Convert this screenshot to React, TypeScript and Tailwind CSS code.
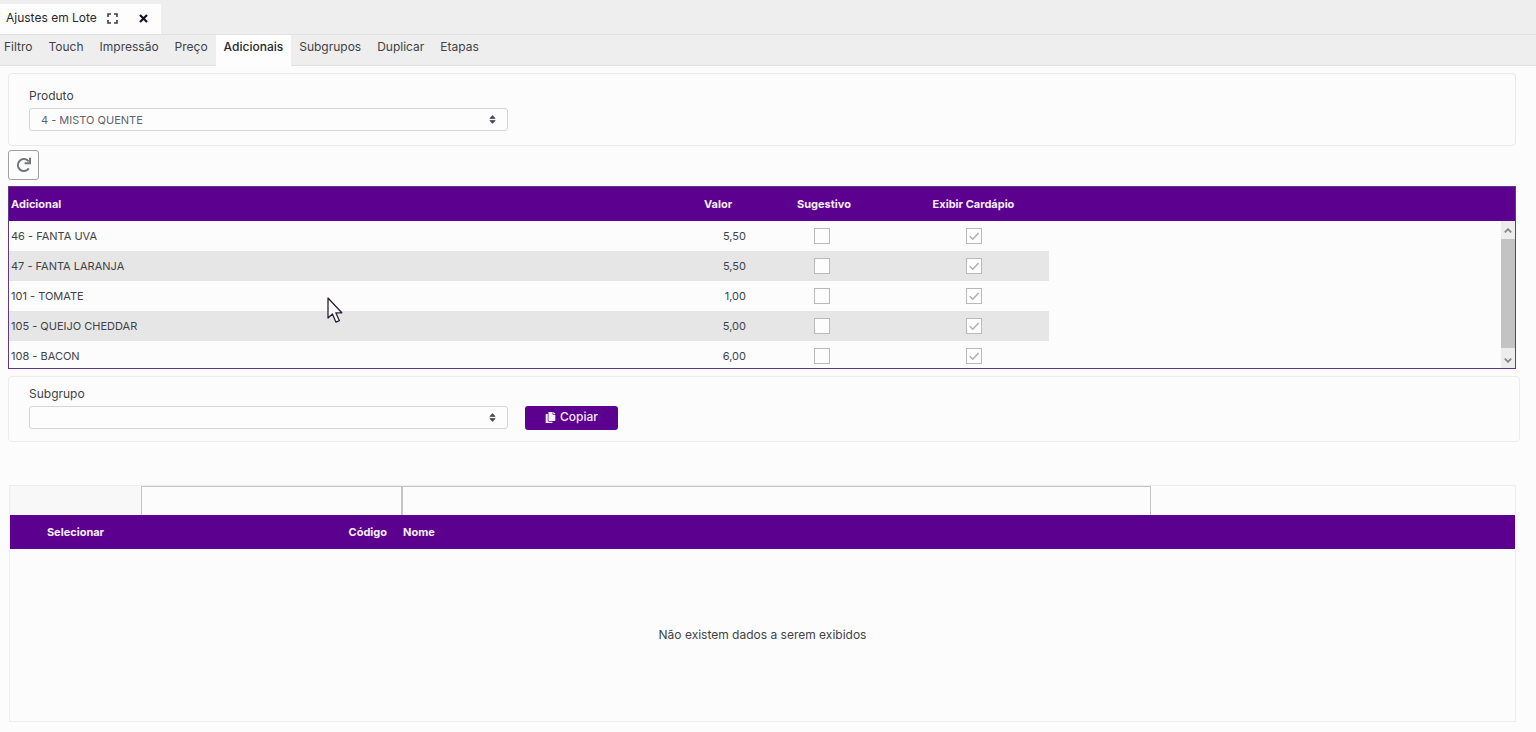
import { FaCopy } from "react-icons/fa";

const tabs = ["Filtro", "Touch", "Impressão", "Preço", "Adicionais", "Subgrupos", "Duplicar", "Etapas"];

const rows = [
  { name: "46 - FANTA UVA", value: "5,50" },
  { name: "47 - FANTA LARANJA", value: "5,50" },
  { name: "101 - TOMATE", value: "1,00" },
  { name: "105 - QUEIJO CHEDDAR", value: "5,00" },
  { name: "108 - BACON", value: "6,00" },
];

function SelectBox({ id, options }: { id: string; options: string[] }) {
  return (
    <div className="relative w-[479px]">
      <select
        id={id}
        className="block h-[23px] w-full appearance-none rounded-[3px] border border-[#d4d4d8] bg-[#fdfdfd] pr-8 pl-[11px] text-[11px] leading-4 text-[#5f6368]"
      >
        {options.map((o) => (
          <option key={o}>{o}</option>
        ))}
      </select>
      <svg viewBox="0 0 7 9" className="pointer-events-none absolute top-[7px] right-3 h-[9px] w-[7px]" aria-hidden="true">
        <path
          fill="#4b4d55"
          stroke="#4b4d55"
          strokeWidth="0.8"
          strokeLinejoin="round"
          d="M3.5 0.6L0.9 3.4h5.2zM3.5 8.4L0.9 5.6h5.2z"
        />
      </svg>
    </div>
  );
}

function CheckCell({ label, checked }: { label: string; checked?: boolean }) {
  return (
    <span className="mx-auto grid size-4 place-items-center">
      <input
        type="checkbox"
        aria-label={label}
        defaultChecked={checked}
        className="peer col-start-1 row-start-1 size-4 appearance-none border border-[#b9b9b9] bg-[#fdfdfd]"
      />
      <svg
        viewBox="0 0 16 16"
        className="pointer-events-none invisible col-start-1 row-start-1 size-4 peer-checked:visible"
        fill="none"
        stroke="#b0b0b0"
        strokeWidth="1.5"
        aria-hidden="true"
      >
        <path d="M3.8 8.2l3 3 5.8-6.2" />
      </svg>
    </span>
  );
}

function Arrow({ up }: { up?: boolean }) {
  return (
    <svg viewBox="0 0 8 5" className="h-[5px] w-2" fill="none" stroke="#858585" strokeWidth="1.8" aria-hidden="true">
      <path d={up ? "M0.8 4.4L4 1.2l3.2 3.2" : "M0.8 0.6L4 3.8 7.2 0.6"} />
    </svg>
  );
}

export default function App() {
  return (
    <div className="min-h-screen bg-[#fcfcfc] font-['Inter','Open_Sans',sans-serif] text-xs leading-4 text-[#3f4248]">
      <header className="bg-[#eeeeee]">
        <div className="flex pt-1">
          <div className="flex h-[30px] w-[161px] items-center bg-[#fdfdfd] pb-0.5 pl-1.5 text-[#26282d]">
            <span className="w-[101px] whitespace-nowrap">Ajustes em Lote</span>
            <button type="button" aria-label="Expandir" className="w-[11px]">
              <svg viewBox="0 0 11 11" className="size-[11px]" fill="none" stroke="#3c3e44" strokeWidth="1.6" aria-hidden="true">
                <path d="M1 4V1h3M7 1h3v3M10 7v3H7M4 10H1V7" />
              </svg>
            </button>
            <button type="button" aria-label="Fechar" className="ml-[21px] w-[9px]">
              <svg viewBox="0 0 9 9" className="size-[9px]" fill="none" stroke="#1c1226" strokeWidth="2.2" aria-hidden="true">
                <path d="M1 1l7 7M8 1L1 8" />
              </svg>
            </button>
          </div>
        </div>
        <nav role="tablist" className="flex h-8 border-y border-[#e2e2e2] pl-1">
          <div className="-ml-2 flex">
            {tabs.map((t) => (
              <button
                key={t}
                type="button"
                role="tab"
                aria-selected={t === "Adicionais"}
                className="-mb-px flex items-start px-2 pt-1 aria-selected:bg-[#fdfdfd] aria-selected:font-medium aria-selected:text-[#26282d]"
              >
                {t}
              </button>
            ))}
          </div>
        </nav>
      </header>

      <main className="pt-[7px] pr-5 pb-2 pl-2">
        <section className="h-[73px] rounded-sm border border-[#e9e9e9] pt-3.5 pl-5">
          <label htmlFor="produto" className="mb-1 block">Produto</label>
          <SelectBox id="produto" options={["4 - MISTO QUENTE"]} />
        </section>

        <button
          type="button"
          aria-label="Atualizar"
          className="mt-1 flex h-[30px] w-[31px] items-center justify-center rounded-[3px] border border-[#a0a0a0]"
        >
          <svg viewBox="0 0 16 16" className="size-4" fill="none" stroke="#74767c" strokeWidth="2" aria-hidden="true">
            <path d="M12.8 11.4A6 6 0 1 1 12.6 4.4" />
            <path d="M14 0.8v5.4H8.6" />
          </svg>
        </button>

        <section className="relative mt-1.5 h-[183px] overflow-hidden border border-[#5c3a8a]">
          <table className="w-full table-fixed border-collapse">
            <colgroup>
              <col className="w-[691px]" />
              <col className="w-[50px]" />
              <col className="w-[148px]" />
              <col className="w-[151px]" />
              <col />
            </colgroup>
            <thead>
              <tr className="h-[34px] bg-[#5c008f] text-[11px] text-[#f5effa]">
                <th className="pl-0.5 text-left">Adicional</th>
                <th className="pl-1 text-left">Valor</th>
                <th>Sugestivo</th>
                <th>Exibir Cardápio</th>
                <td />
              </tr>
            </thead>
            <tbody>
              {rows.map((r) => (
                <tr key={r.name} className="group h-[30px] text-[11px]">
                  <td className="pl-0.5 group-even:bg-[#e6e6e6]">{r.name}</td>
                  <td className="pr-1 text-right group-even:bg-[#e6e6e6]">{r.value}</td>
                  <td className="pr-1 group-even:bg-[#e6e6e6]">
                    <CheckCell label={`Sugestivo ${r.name}`} />
                  </td>
                  <td className="group-even:bg-[#e6e6e6]">
                    <CheckCell label={`Exibir Cardápio ${r.name}`} checked />
                  </td>
                  <td />
                </tr>
              ))}
            </tbody>
          </table>
          <div className="absolute top-[34px] right-0 bottom-0 flex w-3.5 flex-col bg-[#ededed]">
            <button type="button" aria-label="Rolar para cima" className="flex h-[18px] items-center justify-center">
              <Arrow up />
            </button>
            <div className="flex-1 bg-[#c3c3c3]" />
            <button type="button" aria-label="Rolar para baixo" className="flex h-5 items-center justify-center pt-1">
              <Arrow />
            </button>
          </div>
        </section>

        <section className="mt-[7px] -mr-1 flex h-[66px] items-start rounded-sm border border-[#ececec] pt-[9px] pl-5">
          <div>
            <label htmlFor="subgrupo" className="mb-1 block">Subgrupo</label>
            <SelectBox id="subgrupo" options={[""]} />
          </div>
          <button
            type="button"
            className="mt-5 ml-[17px] flex h-6 w-[93px] items-center justify-center gap-1 rounded-[3px] bg-[#5c008f] pb-0.5 font-medium text-[#f5effa]"
          >
            <FaCopy className="size-[11px]" aria-hidden="true" />
            Copiar
          </button>
        </section>

        <section className="mt-[43px] ml-px border border-[#ededed]">
          <div className="flex h-[29px]">
            <div className="w-[131px] bg-[#f8f8f8]" />
            <input type="text" aria-label="Filtrar código" className="w-[261px] border border-b-0 border-[#c4c4c4] px-2" />
            <input type="text" aria-label="Filtrar nome" className="w-[749px] border border-b-0 border-[#c4c4c4] px-2" />
          </div>
          <table className="w-full table-fixed border-collapse">
            <colgroup>
              <col className="w-[131px]" />
              <col className="w-[250px]" />
              <col />
            </colgroup>
            <thead>
              <tr className="h-[34px] bg-[#5c008f] text-[11px] text-[#f5effa]">
                <th>Selecionar</th>
                <th className="pr-1 text-right">Código</th>
                <th className="pl-3 text-left">Nome</th>
              </tr>
            </thead>
            <tbody>
              <tr className="h-[172px]">
                <td colSpan={3} className="text-center">Não existem dados a serem exibidos</td>
              </tr>
            </tbody>
          </table>
        </section>
      </main>

      <svg viewBox="0 0 16 27" className="pointer-events-none absolute top-[297px] left-[327px] h-[27px] w-4" aria-hidden="true">
        <path
          d="M1 1v20l4.4-4 3.6 8.2 3.4-1.5-3.6-7.9h6z"
          fill="#fdfdfd"
          stroke="#2a2138"
          strokeWidth="1.3"
          strokeLinejoin="round"
        />
      </svg>
    </div>
  );
}
